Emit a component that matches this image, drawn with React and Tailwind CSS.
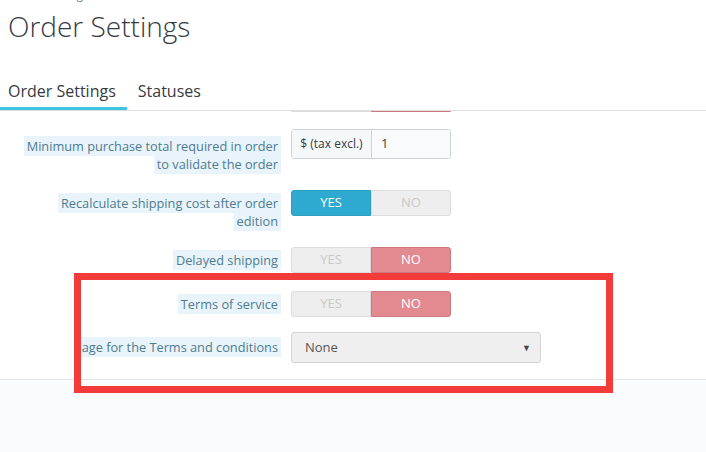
import React from 'react';

const font = { fontFamily: '"Open Sans", "Liberation Sans", sans-serif' };

const Label = ({ children, pt }) => (
  <div className={`w-[281px] shrink-0 text-right text-[12.75px] leading-[18px] text-[#4f7b91] ${pt}`}>
    <span className="bg-[#e8f4fa] px-[3px] py-[1px] box-decoration-clone">{children}</span>
  </div>
);

const Toggle = ({ value }) => {
  const yes = value === 'yes';
  return (
    <div className="flex h-[26px] w-[160px] text-[13px] uppercase">
      <div
        className={`flex flex-1 items-center justify-center rounded-l-[3px] border ${
          yes ? 'border-[#2a9fc2] bg-[#2eaad0] text-white' : 'border-[#dcdcdc] bg-[#eeeeee] text-[#c8c8c8]'
        }`}
      >
        Yes
      </div>
      <div
        className={`flex flex-1 items-center justify-center rounded-r-[3px] border ${
          yes ? 'border-[#dcdcdc] bg-[#eeeeee] text-[#c8c8c8]' : 'border-[#cd777e] bg-[#e38a91] text-white'
        }`}
      >
        No
      </div>
    </div>
  );
};

export default function App() {
  return (
    <div className="relative h-[452px] w-[706px] overflow-hidden bg-white text-[#363a41]" style={font}>
      <div className="-mt-[13px] h-[16px] pl-[8px] text-[12px] leading-[16px] text-[#6c868e]">Order Settings</div>
      <h1 className="mt-[7px] pl-[8px] text-[28px] leading-[32px] font-light">Order Settings</h1>

      <div className="mt-[39px] flex border-b border-[#dddddd] text-[16px] leading-[20px]">
        <div className="border-b-[3px] border-[#3ec4df] pb-[6px] pl-[8px] pr-[11px]">Order Settings</div>
        <div className="pl-[11px] pb-[6px]">Statuses</div>
      </div>

      <div className="h-[268px] overflow-hidden">
        {/* bottom edge of the row scrolled out of view */}
        <div className="flex h-[1px]">
          <div className="w-[291px] shrink-0" />
          <div className="w-[80px] rounded-bl-[3px] bg-[#dcdcdc]" />
          <div className="w-[80px] rounded-br-[3px] bg-[#cd777e]" />
        </div>

        <div className="mt-[17px] flex items-start gap-[10px]">
          <Label pt="pt-[8px]">
            Minimum purchase total required in order
            <br />
            to validate the order
          </Label>
          <div className="flex h-[30px] w-[160px] rounded-[3px] border border-[#c7d5da] text-[13px]">
            <div className="flex w-[80px] items-center justify-center border-r border-[#c7d5da] bg-[#f5f8f9] text-[12px]">
              $ (tax excl.)
            </div>
            <div className="flex flex-1 items-center bg-[#f8fafb] pl-[9px] text-[#363a41]">1</div>
          </div>
        </div>

        <div className="mt-[17px] flex items-start gap-[10px]">
          <Label pt="pt-[4px]">
            Recalculate shipping cost after order
            <br />
            edition
          </Label>
          <Toggle value="yes" />
        </div>

        <div className="mt-[17px] flex items-start gap-[10px]">
          <Label pt="pt-[4px]">Delayed shipping</Label>
          <Toggle value="no" />
        </div>

        <div className="mt-[18px] flex items-start gap-[10px]">
          <Label pt="pt-[4px]">Terms of service</Label>
          <Toggle value="no" />
        </div>

        <div className="mt-[15px] flex items-start gap-[10px]">
          <Label pt="pt-[6px]">age for the Terms and conditions</Label>
          <div className="flex h-[31px] w-[250px] items-center justify-between rounded-[3px] border border-[#d3d3d3] bg-[#efefef] pl-[13px] pr-[9px] text-[13px] text-[#555555]">
            <span>None</span>
            <span className="text-[9px] text-[#444444]">▼</span>
          </div>
        </div>
      </div>

      <div className="h-[73px] border-t border-[#e6e6e6] bg-[#fafbfc]" />

      <div className="absolute left-[74px] top-[273px] h-[120px] w-[539px] border-[7px] border-[#f33b3b]" />
    </div>
  );
}
